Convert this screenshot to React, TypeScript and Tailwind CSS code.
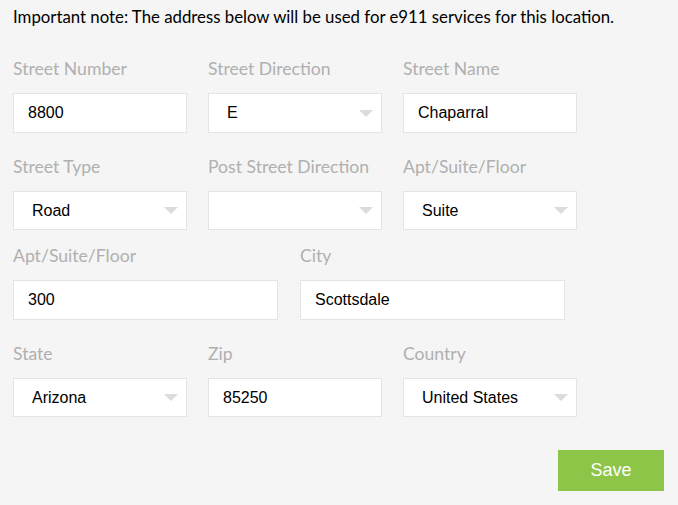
function Label({ children }: { children: string }) {
  return (
    <div className="h-[20px] leading-[20px] text-[17.6px] text-[#b0b0b0] font-['Lato',sans-serif] whitespace-nowrap mb-[15px] pt-[1px]">
      {children}
    </div>
  );
}

function TextBox({ value, w = "w-[174px]", h = "h-[40px]" }: { value: string; w?: string; h?: string }) {
  return (
    <div className={`${w} ${h} bg-white border border-[#e4e4e4] flex items-center pl-[14px] text-[16px] text-black font-['Liberation_Sans',Arial,sans-serif]`}>
      {value}
    </div>
  );
}

function SelectBox({ value, h = "h-[40px]" }: { value: string; h?: string }) {
  return (
    <div className={`w-[174px] ${h} bg-white border border-[#e4e4e4] flex items-center justify-between pl-[18px] pr-[8px] text-[16px] text-black font-['Liberation_Sans',Arial,sans-serif]`}>
      <span>{value}</span>
      <svg width="14" height="7" viewBox="0 0 14 7">
        <path d="M0 0 L14 0 L7 7 Z" fill="#dcdcdc" />
      </svg>
    </div>
  );
}

function Field({ label, children }: { label: string; children: React.ReactNode }) {
  return (
    <div className="flex flex-col">
      <Label>{label}</Label>
      {children}
    </div>
  );
}

export default function App() {
  return (
    <div className="w-[678px] h-[505px] bg-[#f5f5f5] pl-[13px] pr-[14px] pt-[8px] overflow-hidden">
      <p className="text-[16.8px] leading-[18px] text-black font-['Lato',sans-serif] whitespace-nowrap">
        Important note: The address below will be used for e911 services for this location.
      </p>

      <div className="mt-[32px] flex gap-[21px]">
        <Field label="Street Number">
          <TextBox value="8800" />
        </Field>
        <Field label="Street Direction">
          <SelectBox value="E" />
        </Field>
        <Field label="Street Name">
          <TextBox value="Chaparral" />
        </Field>
      </div>

      <div className="mt-[23px] flex gap-[21px]">
        <Field label="Street Type">
          <SelectBox value="Road" h="h-[39px]" />
        </Field>
        <Field label="Post Street Direction">
          <SelectBox value="" h="h-[39px]" />
        </Field>
        <Field label="Apt/Suite/Floor">
          <SelectBox value="Suite" h="h-[39px]" />
        </Field>
      </div>

      <div className="mt-[15px] flex gap-[22px]">
        <Field label="Apt/Suite/Floor">
          <TextBox value="300" w="w-[265px]" />
        </Field>
        <Field label="City">
          <TextBox value="Scottsdale" w="w-[265px]" />
        </Field>
      </div>

      <div className="mt-[23px] flex gap-[21px]">
        <Field label="State">
          <SelectBox value="Arizona" h="h-[39px]" />
        </Field>
        <Field label="Zip">
          <TextBox value="85250" h="h-[39px]" />
        </Field>
        <Field label="Country">
          <SelectBox value="United States" h="h-[39px]" />
        </Field>
      </div>

      <div className="mt-[33px] flex justify-end">
        <button className="w-[106px] h-[41px] bg-[#8dc549] text-white text-[18px] font-['Liberation_Sans',Arial,sans-serif]">
          Save
        </button>
      </div>
    </div>
  );
}
